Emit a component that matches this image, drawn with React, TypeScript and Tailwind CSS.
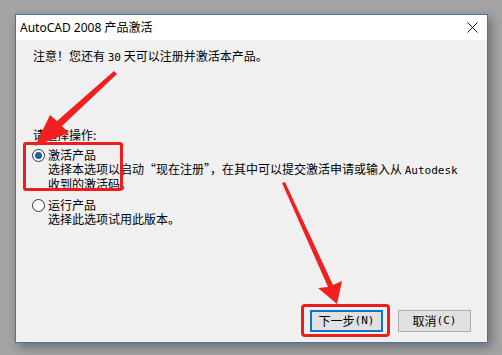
import React from 'react';

const cjk = { fontFamily: '"Noto Sans CJK SC", "Noto Sans", sans-serif' };
const ui = { fontFamily: '"Noto Sans", "Noto Sans CJK SC", sans-serif' };
const mono = { fontFamily: '"DejaVu Sans Mono", "Liberation Mono", monospace' };

function Radio({ checked }: { checked: boolean }) {
  return (
    <span className="mt-[1px] flex h-[13px] w-[13px] shrink-0 items-center justify-center rounded-full border border-[#333] bg-white">
      {checked && <span className="h-[7px] w-[7px] rounded-full bg-[#1a5fa8]" />}
    </span>
  );
}

function Option({ checked, title, children }: { checked: boolean; title: string; children: React.ReactNode }) {
  return (
    <div className="flex gap-[3px]">
      <Radio checked={checked} />
      <div className="flex flex-col">
        <div className="h-[14px] leading-[14px]">{title}</div>
        <div className="leading-[13px]">{children}</div>
      </div>
    </div>
  );
}

export default function App() {
  return (
    <div className="relative h-[355px] w-[502px] overflow-hidden bg-[#a4a4a4] pl-[15px] pt-[14px]">
      <div className="flex h-[329px] w-[473px] flex-col border border-[#3a78b5] bg-[#f0f0f0] shadow-[3px_4px_10px_rgba(0,0,0,0.35)]">
        <div className="flex h-[25px] shrink-0 items-center justify-between bg-white pl-[4px] pr-[9px] text-[12px] text-black" style={ui}>
          <span>AutoCAD 2008 产品激活</span>
          <svg width="11" height="11" viewBox="0 0 11 11">
            <path d="M0.5 0.5 L10.5 10.5 M10.5 0.5 L0.5 10.5" stroke="#111" strokeWidth="1" />
          </svg>
        </div>
        <div className="flex flex-1 flex-col pl-[17px] pr-[16px] pt-[8px] text-[12px] text-black" style={cjk}>
          <div className="h-[16px] leading-[16px]">
            注意！您还有 <span style={mono} className="text-[11px]">30</span> 天可以注册并激活本产品。
          </div>
          <div className="mt-[63px] h-[16px] leading-[16px]">请选择操作:</div>
          <div className="ml-[-1px] mt-[5px] flex flex-col gap-[8px]">
            <Option checked title="激活产品">
              选择本选项以启动“现在注册”，在其中可以提交激活申请或输入从 <span style={mono} className="text-[11px]">Autodesk</span>
              <br />
              收到的激活码。
            </Option>
            <Option checked={false} title="运行产品">
              选择此选项试用此版本。
            </Option>
          </div>
          <div className="mb-[10px] mt-auto flex justify-end gap-[15px]">
            <button className="flex h-[22px] w-[73px] items-center justify-center border-2 border-[#0a74d1] bg-[#e1e1e1] text-[12px]">
              下一步<span style={mono} className="text-[11px]">(N)</span>
            </button>
            <button className="flex h-[22px] w-[73px] items-center justify-center border border-[#adadad] bg-[#e1e1e1] text-[12px]">
              取消<span style={mono} className="text-[11px]">(C)</span>
            </button>
          </div>
        </div>
      </div>

      {/* annotations */}
      <div className="absolute left-[23px] top-[142px] h-[49px] w-[100px] rounded-[3px] border-[3px] border-[#ee1c1c]" />
      <div className="absolute left-[301px] top-[304px] h-[33px] w-[89px] rounded-[4px] border-[3px] border-[#ee1c1c]" />
      <svg className="absolute left-0 top-0" width="502" height="355" viewBox="0 0 502 355">
        <polygon points="114,71 117,74 62,126 69,133 35,146 50,115 57,121" fill="#f02020" />
        <polygon points="282,183 285,182 333,285 342,281 337,304 318,288 328,287" fill="#f02020" />
      </svg>
    </div>
  );
}
